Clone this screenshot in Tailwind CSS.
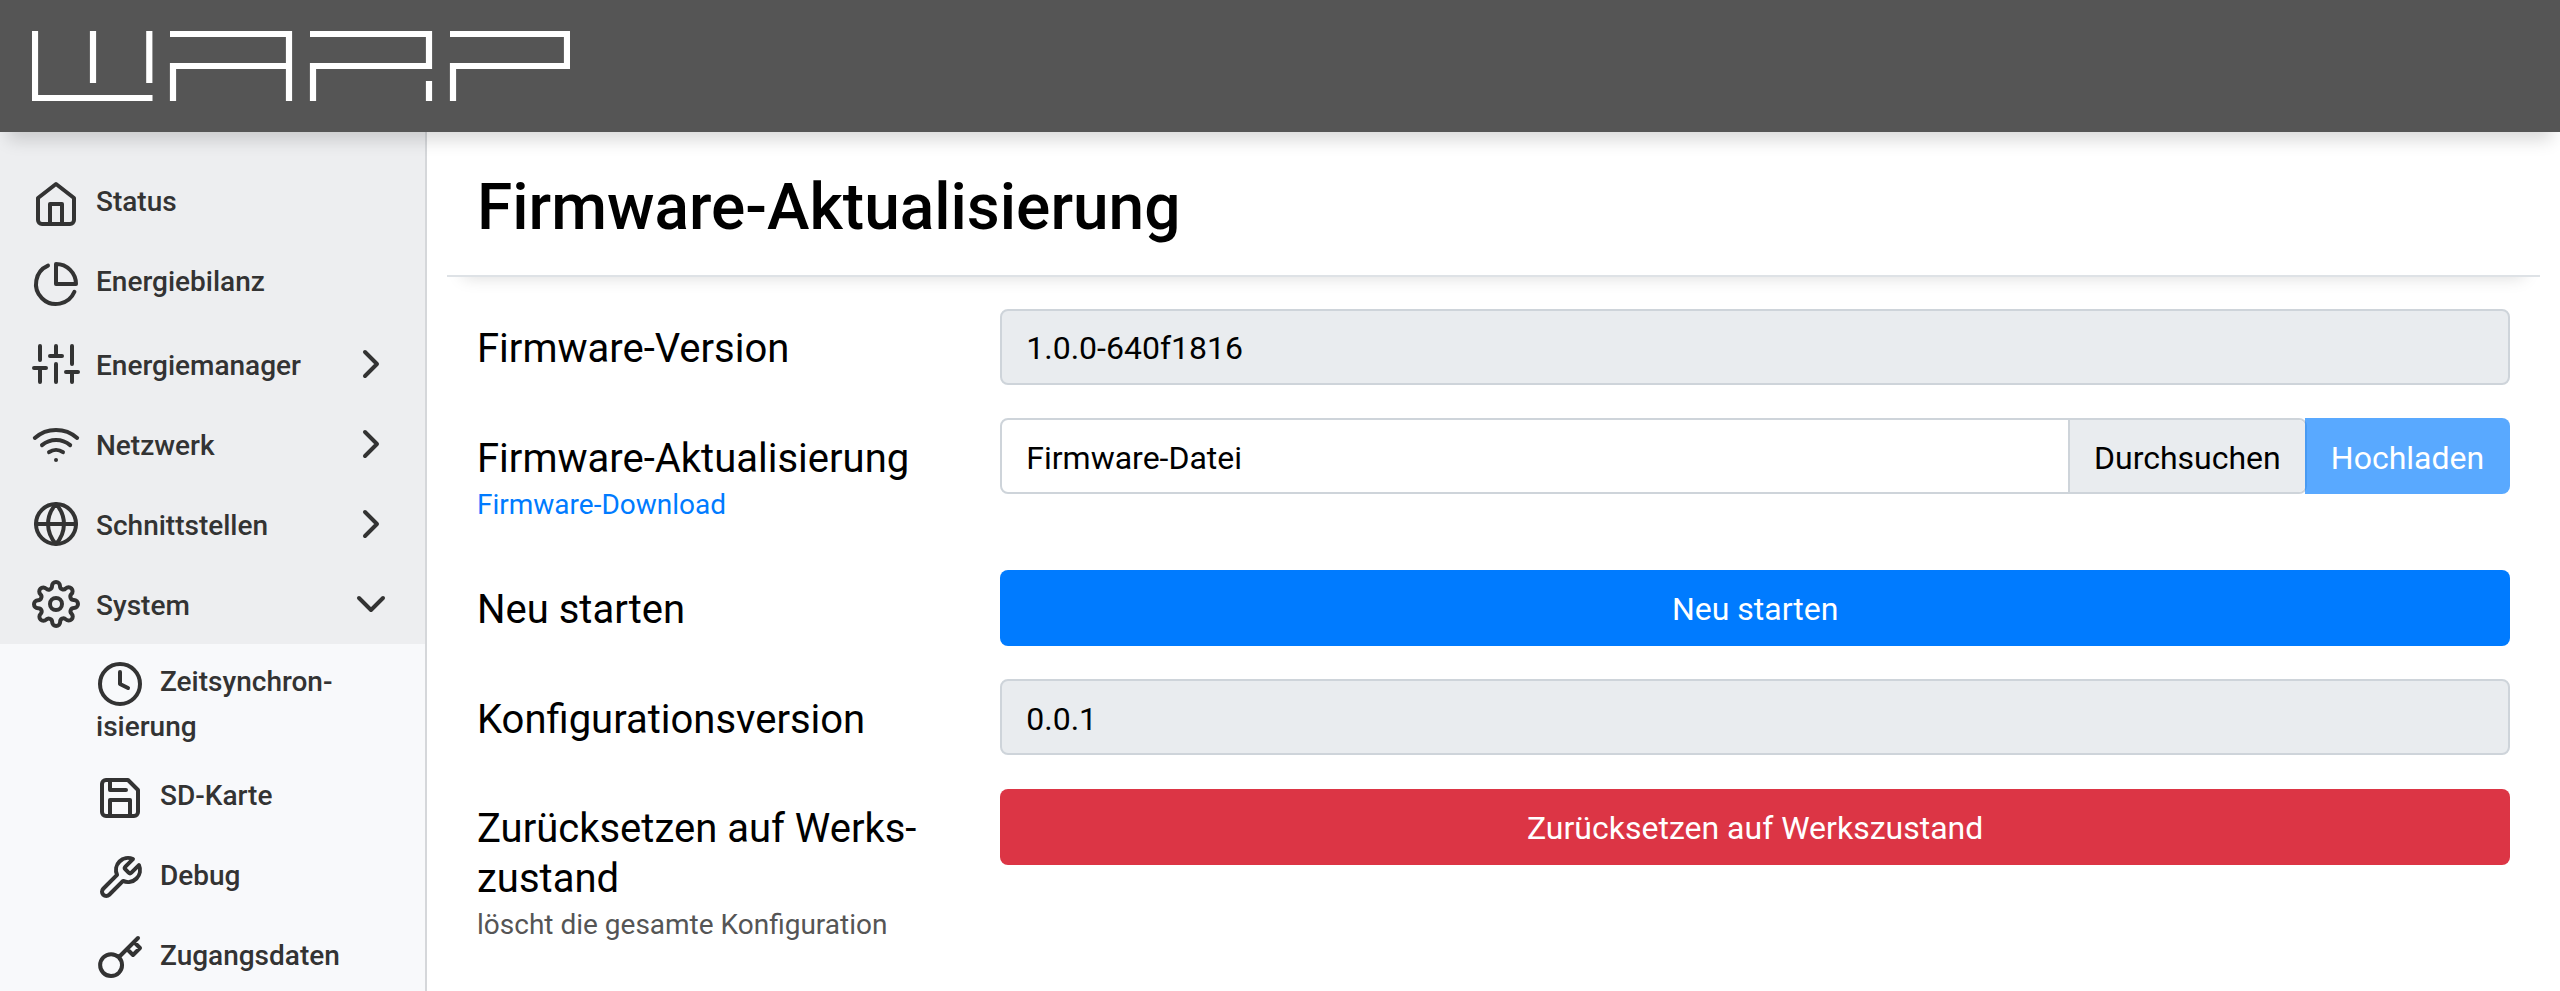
<!DOCTYPE html>
<html lang="de">
<head>
<meta charset="utf-8">
<title>WARP – Firmware-Aktualisierung</title>
<script src="https://cdn.jsdelivr.net/npm/@tailwindcss/browser@4"></script>
</head>
<body class="h-[991px] overflow-hidden bg-white font-[Roboto,sans-serif] text-black flex flex-col">
<header class="relative z-10 h-[132px] shrink-0 bg-[#555] pl-8 flex items-center shadow-[0_16px_16px_-8px_rgba(0,0,0,0.15)]">
  <svg class="w-[538px] h-[70px]" viewBox="0 0 538 70" fill="none" stroke="#fff" stroke-width="6.2">
    <path d="M3 0V67H120.5M61 0V52M117.300 0V52"/>
    <path d="M138 3H257V70M257 35H141V70"/>
    <path d="M278 3H397V35H281V70M397 50V70"/>
    <path d="M418 3H535V35H421V70"/>
  </svg>
</header>
<div class="flex min-h-0 flex-1">
  <nav class="w-[427px] shrink-0 border-r-2 border-[#d5d7da] bg-[#edeef0] pt-8 text-[28px] font-medium leading-[42px] text-[#333] [&_svg]:size-12 [&_svg]:shrink-0 [&_svg]:fill-none [&_svg]:stroke-current [&_svg]:stroke-2 [&_svg]:[stroke-linecap:round] [&_svg]:[stroke-linejoin:round]">
    <a class="flex h-20 items-center gap-4 pl-8 pr-[30px]"><svg viewBox="0 0 24 24"><path d="M3 9l9-7 9 7v11a2 2 0 0 1-2 2H5a2 2 0 0 1-2-2z"/><path d="M9 22V12h6v10"/></svg><span class="-mt-1">Status</span></a>
    <a class="flex h-20 items-center gap-4 pl-8 pr-[30px]"><svg viewBox="0 0 24 24"><path d="M21.210 15.890A10 10 0 1 1 8 2.830"/><path d="M22 12A10 10 0 0 0 12 2v10z"/></svg><span class="-mt-1">Energiebilanz</span></a>
    <a class="flex h-20 items-center gap-4 pl-8 pr-[30px]"><svg viewBox="0 0 24 24"><path d="M4 21v-7M4 10V3M12 21v-9M12 8V3M20 21v-5M20 12V3M1 14h6M9 8h6M17 16h6"/></svg><span class="mt-1 flex-1">Energiemanager</span><svg viewBox="0 0 24 24"><path d="M9 18l6-6-6-6"/></svg></a>
    <a class="flex h-20 items-center gap-4 pl-8 pr-[30px]"><svg viewBox="0 0 24 24"><path d="M5 12.550a11 11 0 0 1 14.080 0M1.420 9a16 16 0 0 1 21.160 0M8.530 16.110a6 6 0 0 1 6.950 0M12 20h.01"/></svg><span class="mt-1 flex-1">Netzwerk</span><svg viewBox="0 0 24 24"><path d="M9 18l6-6-6-6"/></svg></a>
    <a class="flex h-20 items-center gap-4 pl-8 pr-[30px]"><svg viewBox="0 0 24 24"><circle cx="12" cy="12" r="10"/><path d="M2 12h20M12 2a15.300 15.300 0 0 1 4 10 15.300 15.300 0 0 1-4 10 15.300 15.300 0 0 1-4-10 15.300 15.300 0 0 1 4-10z"/></svg><span class="mt-1 flex-1">Schnittstellen</span><svg viewBox="0 0 24 24"><path d="M9 18l6-6-6-6"/></svg></a>
    <a class="flex h-20 items-center gap-4 pl-8 pr-[30px]"><svg viewBox="0 0 24 24"><circle cx="12" cy="12" r="3"/><path d="M19.4 15a1.65 1.65 0 0 0 .33 1.82l.06.06a2 2 0 0 1 0 2.830 2 2 0 0 1-2.830 0l-.06-.06a1.65 1.65 0 0 0-1.820-.33 1.65 1.65 0 0 0-1 1.510V21a2 2 0 0 1-2 2 2 2 0 0 1-2-2v-.09A1.65 1.65 0 0 0 9 19.400a1.65 1.65 0 0 0-1.820.33l-.06.06a2 2 0 0 1-2.830 0 2 2 0 0 1 0-2.830l.06-.06a1.65 1.65 0 0 0 .33-1.820 1.65 1.65 0 0 0-1.510-1H3a2 2 0 0 1-2-2 2 2 0 0 1 2-2h.09A1.65 1.65 0 0 0 4.600 9a1.65 1.65 0 0 0-.33-1.820l-.06-.06a2 2 0 0 1 0-2.830 2 2 0 0 1 2.830 0l.06.06a1.65 1.65 0 0 0 1.820.33H9a1.65 1.65 0 0 0 1-1.510V3a2 2 0 0 1 2-2 2 2 0 0 1 2 2v.09a1.65 1.65 0 0 0 1 1.510 1.65 1.65 0 0 0 1.820-.33l.06-.06a2 2 0 0 1 2.830 0 2 2 0 0 1 0 2.830l-.06.06a1.65 1.65 0 0 0-.33 1.820V9a1.65 1.65 0 0 0 1.510 1H21a2 2 0 0 1 2 2 2 2 0 0 1-2 2h-.09a1.65 1.65 0 0 0-1.510 1z"/></svg><span class="mt-1 flex-1">System</span><svg viewBox="0 0 24 24"><path d="M6 9l6 6 6-6"/></svg></a>
    <div class="h-[347px] bg-[#f8f9fb] pl-24 pt-4">
      <a class="flex h-[98px] flex-col">
        <span class="flex h-12 items-center gap-4"><svg viewBox="0 0 24 24"><circle cx="12" cy="12" r="10"/><path d="M12 6v6l4 2"/></svg><span class="-mt-1">Zeitsynchron-</span></span>
        <span class="-mt-0.5">isierung</span>
      </a>
      <a class="flex h-20 items-center gap-4"><svg viewBox="0 0 24 24"><path d="M19 21H5a2 2 0 0 1-2-2V5a2 2 0 0 1 2-2h11l5 5v11a2 2 0 0 1-2 2z"/><path d="M17 21v-8H7v8M7 3v5h8"/></svg><span class="-mt-1">SD-Karte</span></a>
      <a class="flex h-20 items-center gap-4"><svg viewBox="0 0 24 24"><path d="M14.700 6.300a1 1 0 0 0 0 1.400l1.600 1.600a1 1 0 0 0 1.400 0l3.770-3.770a6 6 0 0 1-7.940 7.940l-6.910 6.910a2.120 2.120 0 0 1-3-3l6.910-6.910a6 6 0 0 1 7.940-7.940l-3.760 3.760z"/></svg><span class="-mt-1">Debug</span></a>
      <a class="flex h-20 items-center gap-4"><svg viewBox="0 0 24 24"><path d="M21 2l-2 2m-7.610 7.610a5.500 5.500 0 1 1-7.778 7.778 5.500 5.500 0 0 1 7.777-7.777zm0 0L15.500 7.500m0 0l3 3L22 7l-3-3m-3.500 3.500L19 4"/></svg><span class="-mt-1">Zugangsdaten</span></a>
    </div>
  </nav>
  <main class="min-w-0 flex-1 pl-5 pr-5">
    <div class="h-[145px] border-b-2 border-[#dee2e6] pl-[30px] pt-9 shadow-[0_16px_16px_-16px_rgba(0,0,0,0.15)]">
      <h1 class="text-[64px] font-medium leading-[80px]">Firmware-Aktualisierung</h1>
    </div>
    <div class="px-[30px] pt-8 text-[32px] leading-[48px]">
      <div class="flex h-[109px]">
        <div class="w-[523.25px] shrink-0 pt-[15px] text-[40px] leading-[50px]">Firmware-Version</div>
        <div class="flex h-[76px] flex-1 items-center rounded-lg border-2 border-[#ced4da] bg-[#e9ecef] px-6 pt-0.5">1.0.0-640f1816</div>
      </div>
      <div class="flex h-[152px]">
        <div class="w-[523.25px] shrink-0 pt-4 text-[40px] leading-[50px]">Firmware-Aktualisierung<a class="block text-[28px] leading-[42px] text-[#007bff]">Firmware-Download</a></div>
        <div class="flex h-[76px] flex-1">
          <div class="flex flex-1 rounded-lg border-2 border-[#ced4da]">
            <div class="flex flex-1 items-center pl-6 pt-1">Firmware-Datei</div>
            <div class="flex w-[237px] items-center rounded-r-md border-l-2 border-[#ced4da] bg-[#e9ecef] pl-6 pt-1">Durchsuchen</div>
          </div>
          <button class="relative -ml-0.5 w-[205px] rounded-r-lg bg-[#007bff]/65 pt-1 text-white">Hochladen</button>
        </div>
      </div>
      <div class="flex h-[109px]">
        <div class="w-[523.25px] shrink-0 pt-[15px] text-[40px] leading-[50px]">Neu starten</div>
        <button class="h-[76px] flex-1 rounded-lg bg-[#007bff] pt-0.5 text-white">Neu starten</button>
      </div>
      <div class="flex h-[110px]">
        <div class="w-[523.25px] shrink-0 pt-4 text-[40px] leading-[50px]">Konfigurationsversion</div>
        <div class="flex h-[76px] flex-1 items-center rounded-lg border-2 border-[#ced4da] bg-[#e9ecef] px-6 pt-1">0.0.1</div>
      </div>
      <div class="flex">
        <div class="w-[523.25px] shrink-0 pt-[15px] text-[40px] leading-[50px]">Zurücksetzen auf Werks-<br>zustand<div class="text-[28px] leading-[42px] text-[#555]">löscht die gesamte Konfiguration</div></div>
        <button class="h-[76px] flex-1 rounded-lg bg-[#dc3545] pt-0.5 text-white">Zurücksetzen auf Werkszustand</button>
      </div>
    </div>
  </main>
</div>
</body>
</html>
